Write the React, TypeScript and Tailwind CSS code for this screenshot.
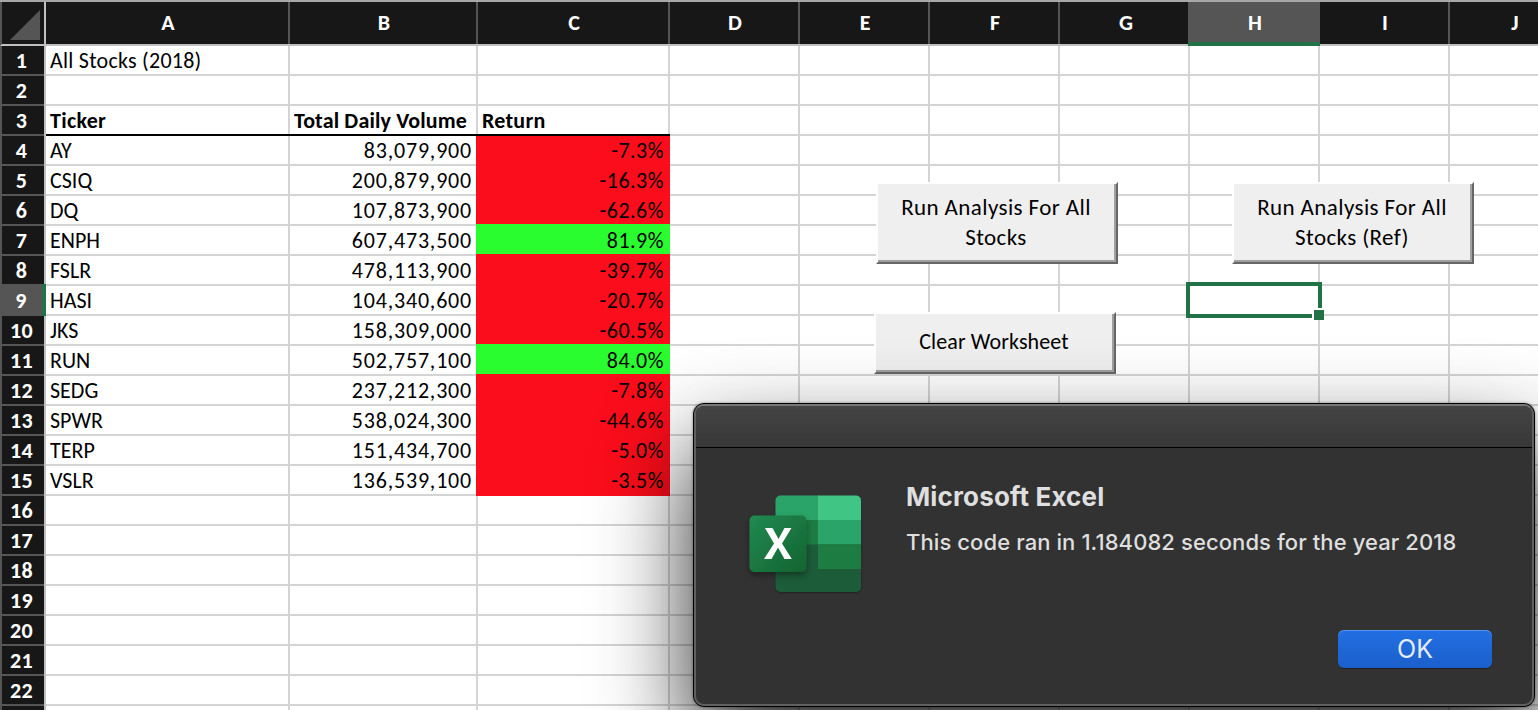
import React from "react";

type Column = { name: string; width: string };

const columns: Column[] = [
  { name: "A", width: "w-[244px]" },
  { name: "B", width: "w-[188px]" },
  { name: "C", width: "w-[192px]" },
  { name: "D", width: "w-[130px]" },
  { name: "E", width: "w-[130px]" },
  { name: "F", width: "w-[130px]" },
  { name: "G", width: "w-[130px]" },
  { name: "H", width: "w-[130px]" },
  { name: "I", width: "w-[130px]" },
  { name: "J", width: "w-[130px]" },
];

const stocks: [string, string, string][] = [
  ["AY", "83,079,900", "-7.3%"],
  ["CSIQ", "200,879,900", "-16.3%"],
  ["DQ", "107,873,900", "-62.6%"],
  ["ENPH", "607,473,500", "81.9%"],
  ["FSLR", "478,113,900", "-39.7%"],
  ["HASI", "104,340,600", "-20.7%"],
  ["JKS", "158,309,000", "-60.5%"],
  ["RUN", "502,757,100", "84.0%"],
  ["SEDG", "237,212,300", "-7.8%"],
  ["SPWR", "538,024,300", "-44.6%"],
  ["TERP", "151,434,700", "-5.0%"],
  ["VSLR", "136,539,100", "-3.5%"],
];

function cellContent(row: number, col: string) {
  if (row === 1 && col === "A") return <span className="tracking-[0.25px]">All Stocks (2018)</span>;
  if (row === 3) {
    if (col === "A") return <b className="tracking-[0.3px]">Ticker</b>;
    if (col === "B") return <b className="tracking-[0.15px]">Total Daily Volume</b>;
    if (col === "C") return <b className="tracking-[0.25px]">Return</b>;
  }
  const stock = stocks[row - 4];
  if (stock) {
    if (col === "A") return <span>{stock[0]}</span>;
    if (col === "B") return <span className="ml-auto tracking-[0.8px]">{stock[1]}</span>;
  }
  return null;
}

function ReturnCell({ value }: { value: string }) {
  const color = value.startsWith("-") ? "bg-[#fc0d1b]" : "bg-[#29fd2f]";
  return (
    <div className={`-mt-0.5 -ml-0.5 flex h-8 w-[194px] shrink-0 items-start justify-end pt-0.5 pr-1.5 leading-[29px] tracking-[0.5px] ${color}`}>
      {value}
    </div>
  );
}

function SheetRow({ row }: { row: number }) {
  const selected = row === 9;
  const isData = row >= 4 && row <= 15;
  return (
    <div className={`flex h-[30px] shrink-0 ${row === 3 ? "relative z-10" : ""}`}>
      {selected ? (
        <div className="-mt-0.5 flex h-8 w-[46px] shrink-0 justify-center border-r-4 border-[#217346] bg-[#555] pt-0.5 leading-[29px] font-bold tracking-[0.3px] text-white">
          {row}
        </div>
      ) : (
        <div className="flex w-[46px] shrink-0 border-r-2 border-[#c0c0c0]">
          <div className="flex w-full justify-center border-b-2 border-l-2 border-[#555] bg-[#171717] pr-[3px] leading-[29px] font-bold tracking-[0.3px] text-white">
            {row <= 22 && row}
          </div>
        </div>
      )}
      {columns.map((c) =>
        isData && c.name === "C" ? (
          <ReturnCell key={c.name} value={stocks[row - 4][2]} />
        ) : (
          <div
            key={c.name}
            className={`flex shrink-0 border-b-2 ${c.width} ${
              row === 3 && "ABC".includes(c.name) ? "border-black" : "border-[#d4d4d4]"
            }`}
          >
            <div className="flex w-full border-r-2 border-[#d4d4d4] px-1 leading-[29px] whitespace-nowrap">
              {cellContent(row, c.name)}
            </div>
          </div>
        ),
      )}
    </div>
  );
}

function FormButton({ className, children }: { className: string; children: React.ReactNode }) {
  return (
    <button
      className={`absolute border-2 border-t-white border-r-[#666] border-b-[#666] border-l-white bg-[#efefef] pr-0.5 pb-0.5 text-center leading-[30px] text-black shadow-[inset_-2px_-2px_0_#a0a0a0] ${className}`}
    >
      {children}
    </button>
  );
}

function ExcelLogo() {
  return (
    <svg className="shrink-0" width="130" height="120" viewBox="0 0 130 120">
      <defs>
        <linearGradient id="tile" x1="0" y1="0" x2="1" y2="1">
          <stop offset="0" stopColor="#218a52" />
          <stop offset="1" stopColor="#14632f" />
        </linearGradient>
        <clipPath id="book">
          <rect x="32.500" y="9.500" width="85.500" height="96.500" rx="5" />
        </clipPath>
        <filter id="soft" x="-30%" y="-30%" width="160%" height="170%">
          <feDropShadow dx="0" dy="3" stdDeviation="3" floodColor="#000" floodOpacity="0.4" />
        </filter>
        <filter id="bookShadow" x="-10%" y="-10%" width="120%" height="120%">
          <feDropShadow dx="0" dy="1" stdDeviation="1" floodColor="#000" floodOpacity="0.4" />
        </filter>
      </defs>
      <g filter="url(#bookShadow)">
        <g clipPath="url(#book)">
          <rect x="32" y="9" width="44" height="25" fill="#2ca468" />
          <rect x="75" y="9" width="44" height="25" fill="#3fc585" />
          <rect x="32" y="34" width="44" height="25" fill="#1b7c43" />
          <rect x="75" y="34" width="44" height="25" fill="#2ca468" />
          <rect x="32" y="58.500" width="87" height="48" fill="#1d5c38" />
          <rect x="75" y="58.500" width="44" height="24.500" fill="#1b7c43" />
        </g>
      </g>
      <rect x="6.500" y="29.500" width="57" height="56.500" rx="5" fill="url(#tile)" filter="url(#soft)" />
      <path d="M22 42H29.500L35.500 53L41.500 42H48.500L39 57.500L48.800 73H41.500L35 61.500L28.500 73H21L31 57.500Z" fill="white" />
    </svg>
  );
}

function MessageDialog() {
  return (
    <div
      role="dialog"
      className="absolute top-[403px] left-[693px] z-20 h-[304px] w-[842px] rounded-[11px] border border-black bg-[#323232] font-['Inter',sans-serif] text-[#dfdfdf] shadow-[0_44px_92px_0_rgba(0,0,0,0.84),0_0_3px_rgba(0,0,0,0.4)]"
    >
      <div className="flex h-full flex-col rounded-[10px] border-2 border-[#606060] border-t-[#777]">
        <div className="h-[42px] shrink-0 rounded-t-lg border-b border-black bg-linear-to-b from-[#444] to-[#383838]" />
        <div className="flex grow pt-8 pl-[47px] whitespace-nowrap">
          <div className="pt-1.5">
            <ExcelLogo />
          </div>
          <div className="pl-[33px]">
            <h1 className="text-[26px] leading-[34px] font-bold tracking-[0.15px]">Microsoft Excel</h1>
            <p className="mt-[13px] text-[22px] leading-[30px] font-[450] tracking-[0.09px]">
              This code ran in 1.184082 seconds for the year 2018
            </p>
          </div>
        </div>
        <div className="flex justify-end pr-10 pb-9">
          <button className="h-[38px] w-[154px] rounded-md bg-linear-to-b from-[#2270e4] to-[#1b5fcb] text-[25px] leading-[38px] text-[#e4ebf9] shadow-[inset_0_1px_0_#5590ea,0_1px_1px_rgba(0,0,0,0.4)]">
            OK
          </button>
        </div>
      </div>
    </div>
  );
}

export default function App() {
  const rows = Array.from({ length: 23 }, (_, i) => i + 1);
  return (
    <main className="relative h-[710px] w-[1538px] overflow-hidden bg-white font-['Carlito','Lato',sans-serif] text-[22px] text-black">
      <div className="flex h-[46px] border-t-2 border-[#a8a8a8]">
        <div className="flex w-[46px] shrink-0 border-r-2 border-b-2 border-l-2 border-r-[#c0c0c0] border-b-[#c0c0c0] border-l-[#555] bg-[#171717]">
          <svg className="mt-2 ml-2" width="30" height="30" viewBox="0 0 30 30">
            <path d="M30 0V30H0Z" fill="#555" />
          </svg>
        </div>
        {columns.map((c) => (
          <div
            key={c.name}
            className={`flex shrink-0 leading-[41px] font-bold text-white ${
              c.name === "H"
                ? "relative -ml-0.5 w-[132px] border-b-4 border-[#217346] bg-[#555]"
                : `border-b-2 border-[#c0c0c0] bg-[#171717] ${c.width}`
            }`}
          >
            <span className={`flex w-full justify-center pl-0.5 ${c.name === "H" || c.name === "G" ? "" : "border-r-2 border-[#555]"}`}>{c.name}</span>
          </div>
        ))}
      </div>
      <div className="flex flex-col">
        {rows.map((r) => (
          <SheetRow key={r} row={r} />
        ))}
      </div>

      <div className="absolute top-[282px] left-[1186px] h-9 w-[136px] border-4 border-[#217346]">
        <div className="absolute -right-1.5 -bottom-1.5 size-3 border-t-2 border-l-2 border-white bg-[#217346]" />
      </div>

      <FormButton className="top-[182px] left-[876px] h-[82px] w-[242px] text-[23px] tracking-[0.4px]">
        Run Analysis For All
        <br />
        Stocks
      </FormButton>
      <FormButton className="top-[182px] left-[1232px] h-[82px] w-[242px] text-[23px] tracking-[0.4px]">
        Run Analysis For All
        <br />
        Stocks (Ref)
      </FormButton>
      <FormButton className="top-[312px] left-[874px] h-[62px] w-[242px] tracking-[0.1px]">Clear Worksheet</FormButton>

      <MessageDialog />
    </main>
  );
}
